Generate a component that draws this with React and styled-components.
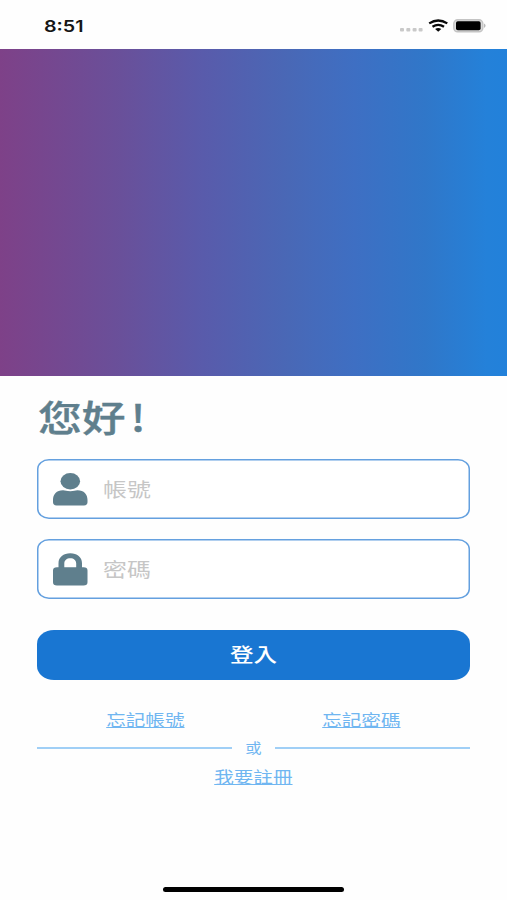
import React from "react";
import styled, { createGlobalStyle } from "styled-components";

const Global = createGlobalStyle`
  * { box-sizing: border-box; }
  body {
    margin: 0;
    background: #fefefe;
    font-family: "Noto Sans CJK TC", "Noto Sans", sans-serif;
  }
`;

const Screen = styled.main`
  width: 507px;
  height: 900px;
  display: flex;
  flex-direction: column;
  overflow: hidden;
  background: #fefefe;
`;

const StatusBar = styled.header`
  height: 49px;
  flex: none;
  display: flex;
  justify-content: space-between;
  padding: 0 20px 0 44px;
`;

const Clock = styled.time`
  margin-top: 16px;
  height: 20px;
  font: 600 16px/20px Inter, sans-serif;
  color: #161616;
  transform: scaleX(1.23);
  transform-origin: left;
`;

const StatusIcons = styled.svg`
  display: block;
  width: 90px;
  height: 20px;
  margin-top: 16px;
`;

const Hero = styled.section`
  height: 327px;
  flex: none;
  background: linear-gradient(90deg, #7e4188 0%, #69509a 24%, #595bab 40%, #4968b6 57%, #3e6fc3 70%, #3077c9 84%, #2481d9 96%, #2281da 100%);
`;

const Form = styled.form`
  padding: 0 37px;
  display: flex;
  flex-direction: column;
`;

const Title = styled.h1`
  display: flex;
  margin: 15px 0 16px 1px;
  height: 52px;
  font-size: 36.5px;
  line-height: 52px;
  font-weight: 500;
  -webkit-text-stroke: 0.4px #5f7f8d;
  color: #5f7f8d;
  transform: scaleX(1.2);
  transform-origin: left;
`;

const Exclamation = styled.span`
  margin-left: 4px;
`;

const Field = styled.label`
  height: 60px;
  display: flex;
  align-items: center;
  padding-left: 15px;
  margin-bottom: ${(p) => p.$gap}px;
  box-shadow: inset 0 0 0 1.5px #64a0df;
  border-radius: 12px / 10px;
  background: #fff;
`;

const FieldIcon = styled.svg`
  display: block;
  flex: none;
  width: 36px;
  height: 33px;
  fill: #5f7f8d;
`;

const Input = styled.input`
  width: 290px;
  height: 40px;
  margin-left: 15px;
  padding: 0;
  border: 0;
  outline: 0;
  background: none;
  font: 400 19.8px/40px "Noto Sans CJK TC", sans-serif;
  color: #333;
  transform: scaleX(1.21);
  transform-origin: left;
  &::placeholder { color: #c6c6c6; opacity: 1; }
`;

const Submit = styled.button`
  height: 50px;
  padding: 0 0 2px;
  border: 0;
  border-radius: 17px / 14px;
  background: #1976d2;
  color: #fff;
  font: 500 19.5px/48px "Noto Sans CJK TC", sans-serif;
`;

const Stretch = styled.span`
  display: inline-block;
  transform: scaleX(1.21);
`;

const LinkRow = styled.nav`
  display: grid;
  grid-template-columns: repeat(${(p) => p.$columns}, 1fr);
  justify-items: center;
  height: 24px;
  margin-top: ${(p) => p.$gap}px;
`;

const TextLink = styled.a`
  font-size: 16.2px;
  line-height: 24px;
  font-weight: 400;
  color: #70b6f1;
  text-decoration: underline;
  text-decoration-thickness: 1px;
  text-underline-offset: 1px;
  transform: scaleX(1.21);
`;

const Divider = styled.div`
  display: flex;
  align-items: center;
  height: 20px;
  margin-top: 7px;
  font-size: 13.5px;
  line-height: 18px;
  color: #70b6f1;
  &::before, &::after {
    content: "";
    flex: 1;
    height: 2px;
    background: #a0cff6;
  }
  span { width: 43px; height: 20px; text-align: center; }
`;

const HomeBar = styled.div`
  width: 181px;
  height: 5px;
  flex: none;
  margin: auto auto 8px 163px;
  border-radius: 3px;
  background: #000;
`;

export default function App() {
  return (
    <>
      <Global />
      <Screen>
        <StatusBar>
          <Clock>8:51</Clock>
          <StatusIcons viewBox="397 16 90 20">
            <g fill="#c9c9c9">
              <rect x="400" y="28" width="4" height="3.6" rx="1" />
              <rect x="406.3" y="28" width="4" height="3.6" rx="1" />
              <rect x="412.6" y="28" width="4" height="3.6" rx="1" />
              <rect x="418.6" y="28" width="4" height="3.6" rx="1" />
            </g>
            <g fill="none" stroke="#090909" strokeWidth="2.3">
              <path d="M429.2 23.4Q438.2 17.6 447.3 23.4" />
              <path d="M432.5 26.8Q438.2 23 444 26.8" />
            </g>
            <path d="M435.1 29Q438.2 27 441.3 29L438.2 31.8Z" fill="#090909" />
            <rect x="453.8" y="19.8" width="29" height="12" rx="3.8" fill="#dcdcdc" stroke="#c4c4c4" strokeWidth="1.4" />
            <rect x="456" y="21.3" width="24.6" height="9" rx="1.8" fill="#000" />
            <path d="M484.2 23.6Q486.8 25.8 484.2 28Z" fill="#a9a9a9" />
          </StatusIcons>
        </StatusBar>
        <Hero />
        <Form onSubmit={(e) => e.preventDefault()}>
          <Title>您好<Exclamation>!</Exclamation></Title>
          <Field $gap={20}>
            <FieldIcon viewBox="0 0 36 33">
              <ellipse cx="18.3" cy="8.3" rx="9.8" ry="8.2" />
              <path d="M11 17.3C13.5 17.3 14.5 18.3 18.3 18.3S23 17.3 25.5 17.3C32 17.3 35.5 21.5 35.5 27V29.3Q35.5 32.4 32 32.4H4.5Q1 32.4 1 29.3V27C1 21.5 4.5 17.3 11 17.3Z" />
            </FieldIcon>
            <Input placeholder="帳號" />
          </Field>
          <Field $gap={31}>
            <FieldIcon viewBox="0 0 36 33">
              <path fillRule="evenodd" d="M6.5 14.3V10.3C6.5 4.2 11.5.3 18.3.3S30 4.2 30 10.3V14.3H31.5Q35.5 14.3 35.5 17.6V29.2Q35.5 32.5 31.5 32.5H5Q1 32.5 1 29.2V17.6Q1 14.3 5 14.3ZM12.3 14.3H24.2V10.5C24.2 7.2 21.8 5.2 18.3 5.2S12.3 7.2 12.3 10.5Z" />
            </FieldIcon>
            <Input type="password" placeholder="密碼" />
          </Field>
          <Submit><Stretch>登入</Stretch></Submit>
          <LinkRow $columns={2} $gap={27}>
            <TextLink>忘記帳號</TextLink>
            <TextLink>忘記密碼</TextLink>
          </LinkRow>
          <Divider><span><Stretch>或</Stretch></span></Divider>
          <LinkRow $columns={1} $gap={6}>
            <TextLink>我要註冊</TextLink>
          </LinkRow>
        </Form>
        <HomeBar />
      </Screen>
    </>
  );
}
